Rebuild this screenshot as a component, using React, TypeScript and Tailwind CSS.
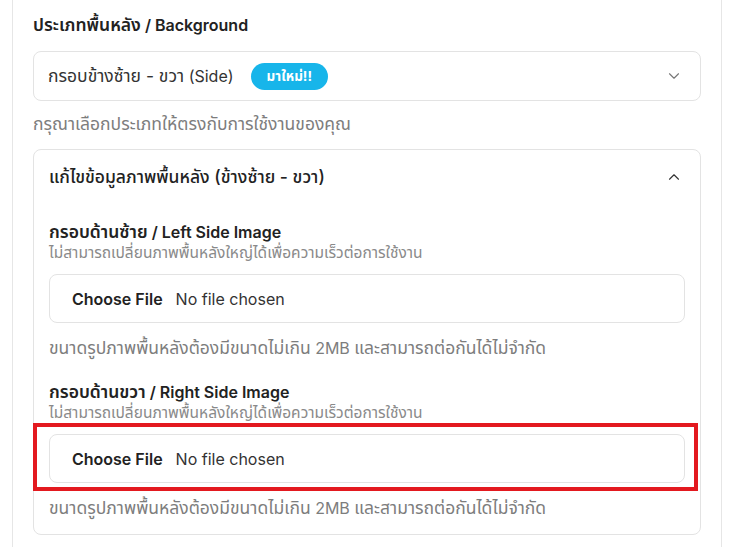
import React from 'react';
import { ChevronDown, ChevronUp } from 'lucide-react';

const FONT = { fontFamily: 'Inter, "Noto Sans", "Noto Sans Thai", sans-serif' };

// Thai glyphs from the fallback font run narrower, so Thai runs get a bit more size
const T: React.FC<{ children: React.ReactNode; small?: boolean }> = ({ children, small }) => (
  <span className={small ? 'text-[15.5px]' : 'text-[17.5px]'}>{children}</span>
);

const FileField: React.FC<{ highlight?: boolean }> = ({ highlight = false }) => (
  <div className="relative">
    <div className="flex h-[49px] items-center rounded-lg border border-[#e3e3e3] bg-white pl-[22px] text-[16px]">
      <span className="font-semibold text-[#222]">Choose File</span>
      <span className="ml-[13px] text-[#333]">No file chosen</span>
    </div>
    {highlight && (
      <div className="pointer-events-none absolute -top-[11px] -bottom-[8px] -left-[16px] -right-[13px] border-4 border-[#e3191f]" />
    )}
  </div>
);

const ImageSection: React.FC<{ thai: string; eng: string; highlight?: boolean }> = ({ thai, eng, highlight }) => (
  <div>
    <h4 className="text-[16px] font-semibold leading-[22px] text-[#222]">
      <T>{thai}</T> / {eng}
    </h4>
    <p className="leading-[18px] text-[#8a8a8a]">
      <T small>ไม่สามารถเปลี่ยนภาพพื้นหลังใหญ่ได้เพื่อความเร็วต่อการใช้งาน</T>
    </p>
    <div className="mt-[12px]">
      <FileField highlight={highlight} />
    </div>
    <p className="mt-[13px] text-[16px] leading-[24px] text-[#7d7d7d]">
      <T>ขนาดรูปภาพพื้นหลังต้องมีขนาดไม่เกิน</T> 2MB <T>และสามารถต่อกันได้ไม่จำกัด</T>
    </p>
  </div>
);

export default function App() {
  return (
    <div className="h-[547px] w-[732px] overflow-hidden bg-white" style={FONT}>
      <div className="ml-[12px] h-full w-[710px] border-x border-[#e6e6e6] px-[20px] pt-[13px]">
        <h3 className="text-[16px] font-semibold leading-[24px] text-[#222]">
          <T>ประเภทพื้นหลัง</T> / Background
        </h3>

        {/* Type select */}
        <div className="mt-[14px] flex h-[50px] items-center justify-between rounded-lg border border-[#e3e3e3] pl-[14px] pr-[17px]">
          <div className="flex items-center">
            <span className="text-[16px] text-[#333]">
              <T>กรอบข้างซ้าย - ขวา</T> (Side)
            </span>
            <span className="ml-[17px] flex h-[27px] items-center rounded-full bg-[#17b5ea] px-[16px] text-[13.5px] font-bold text-white">
              มาใหม่!!
            </span>
          </div>
          <ChevronDown className="h-[18px] w-[18px] text-[#777]" strokeWidth={1.5} />
        </div>
        <p className="mt-[11px] text-[16px] leading-[24px] text-[#7d7d7d]">
          <T>กรุณาเลือกประเภทให้ตรงกับการใช้งานของคุณ</T>
        </p>

        {/* Accordion */}
        <div className="mt-[13px] rounded-lg border border-[#e3e3e3] px-[15px] pb-[14px]">
          <div className="flex h-[54px] items-center justify-between">
            <span className="text-[16px] font-medium text-[#222]">
              <T>แก้ไขข้อมูลภาพพื้นหลัง (ข้างซ้าย - ขวา)</T>
            </span>
            <ChevronUp className="mr-[2px] h-[18px] w-[18px] text-[#333]" strokeWidth={1.5} />
          </div>
          <div className="mt-[17px] flex flex-col gap-[21px]">
            <ImageSection thai="กรอบด้านซ้าย" eng="Left Side Image" />
            <ImageSection thai="กรอบด้านขวา" eng="Right Side Image" highlight />
          </div>
        </div>
      </div>
    </div>
  );
}
